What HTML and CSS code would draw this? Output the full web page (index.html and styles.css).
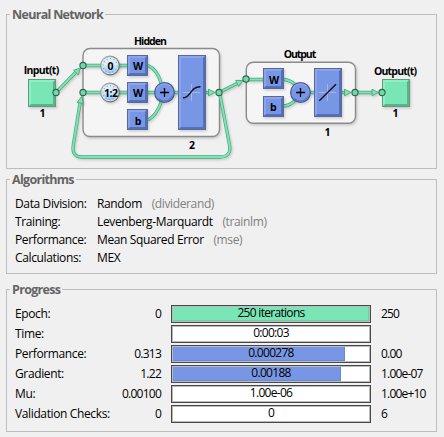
FILE: index.html
```html
<!DOCTYPE html>
<html lang="en">
<head>
<meta charset="utf-8">
<title>Neural Network Training</title>
<link rel="stylesheet" href="styles.css">
</head>
<body>
<fieldset class="panel network">
<legend>Neural Network</legend>
<svg class="diagram" viewBox="7 22 429 146" width="429" height="146">
  <defs>
    <linearGradient id="lens" x1="0" y1="0" x2="0" y2="1"><stop offset="0" stop-color="#dcecf8"/><stop offset=".45" stop-color="#dceefb"/><stop offset="1" stop-color="#84c4fb"/></linearGradient>
    <linearGradient id="rim" x1="0" y1="0" x2="1" y2="1"><stop offset="0" stop-color="#b4b4b4"/><stop offset="1" stop-color="#5c5c5c"/></linearGradient>
    <filter id="shade" x="-30%" y="-30%" width="170%" height="170%" color-interpolation-filters="sRGB"><feDropShadow dx="1.2" dy="1.5" stdDeviation="0.8" flood-color="#000" flood-opacity=".16"/></filter>
    <g id="weight">
      <rect width="21" height="21" fill="#6078bd"/>
      <path d="M1 1H20L18 3H3V18L1 20Z" fill="#8ba4ec"/>
      <path d="M20 1V20H1L3 18H18V3Z" fill="#5570bb"/>
      <rect x="3" y="3" width="15" height="15" fill="#7796e6"/>
      <rect x=".5" y=".5" width="20" height="20" fill="none" stroke="#5a6a96"/>
    </g>
    <g id="terminal">
      <rect width="28" height="28" fill="#79e7b5"/>
      <path d="M1 1H27L25 3H3V25L1 27Z" fill="#8bf0c3"/>
      <path d="M27 1V27H1L3 25H25V3Z" fill="#58b589"/>
      <rect x=".5" y=".5" width="27" height="27" fill="none" stroke="#66977f"/>
    </g>
    <g id="delay">
      <circle r="9.900" fill="url(#rim)"/><circle r="8.700" fill="#dfe1e3"/>
      <circle r="7.900" fill="url(#lens)"/>
      <circle r="6.900" fill="none" stroke="#5aa6e6" stroke-width="1.200" stroke-dasharray=".9 2.7"/>
    </g>
    <g id="sum">
      <circle r="9.900" fill="#7796e6" stroke="#4b5a88" stroke-width="1.200"/>
      <path d="M-8-3A8.500 8.500 0 0 1 6-6" fill="none" stroke="#8fa8ec" stroke-width="1.200"/>
      <path d="M8 3A8.500 8.500 0 0 1-6 6" fill="none" stroke="#5b77c6" stroke-width="1.200"/>
      <path d="M-4.500 0H4.500M0-4.500V4.500" stroke="#000" stroke-width="1.300"/>
    </g>
    <circle id="port" r="3.100" fill="#70d9a9" stroke="#32634c" stroke-width="1.100"/>
    <path id="head" d="M-6.500-3.300L0 0L-6.500 3.300Z" fill="#79e7b5" stroke="#4a9f78" stroke-width=".8"/>
    <path id="wires" d="M56 92.500L78 70M83 65.500H128M83 92.500H178M148 65.500Q157 69 161.500 84M148 120Q157 115 161.500 101M206 92.500H210M219 92.500L237 83.500M246 79.500H263M284 79.500Q290 80 295 84.500M284 106Q290 105.500 295 100.500M310 92.500H314M342 92.500H345M356 92.500H374M219.500 92.500L229.700 146Q231 157 220 157H82Q71.500 157 73.300 145L80 103"/>
  </defs>

  <g filter="url(#shade)" stroke="#8b8b8b" stroke-width="1.400">
    <rect x="83" y="48.500" width="136.500" height="88" rx="7" fill="#f5f5f5"/>
    <rect x="246.300" y="62.300" width="109.200" height="61" rx="7" fill="#f5f5f5"/>
  </g>

  <g filter="url(#shade)" fill="none">
    <use href="#wires" stroke="#4ca57c" stroke-width="3.300"/>
    <use href="#wires" stroke="#7ae5b4" stroke-width="1.900"/>
    <use href="#head" transform="translate(80.500 68) rotate(-45)"/>
    <use href="#head" transform="translate(81.500 96.500) rotate(-80)"/>
    <use href="#head" transform="translate(215 92.500)"/>
    <use href="#head" transform="translate(243 80.500) rotate(-26)"/>
    <use href="#head" transform="translate(351 92.500)"/>
    <use href="#head" transform="translate(378.500 92.500)"/>
  </g>

  <g filter="url(#shade)">
    <use href="#terminal" x="28" y="79"/><use href="#terminal" x="382" y="79"/>
    <use href="#delay" x="110" y="65.500"/><use href="#delay" x="110" y="92.500"/>
    <use href="#weight" x="127" y="55"/><use href="#weight" x="127" y="82"/><use href="#weight" x="127" y="109"/>
    <use href="#weight" x="263" y="68"/><use href="#weight" x="263" y="96"/>
    <use href="#sum" x="164.500" y="92.500"/><use href="#sum" x="300.500" y="92.500"/>
    <g>
      <rect x="178" y="55" width="28" height="75" fill="#7796e6"/>
      <path d="M179 56H205L203 58H181V127L179 129Z" fill="#8ba4ec"/>
      <path d="M205 56V129H179L181 127H203V58Z" fill="#5570bb"/>
      <rect x="178.500" y="55.500" width="27" height="74" fill="none" stroke="#5a6a96"/>
      <rect x="314" y="68" width="28" height="49" fill="#7796e6"/>
      <path d="M315 69H341L339 71H317V114L315 116Z" fill="#8ba4ec"/>
      <path d="M341 69V116H315L317 114H339V71Z" fill="#5570bb"/>
      <rect x="314.500" y="68.500" width="27" height="48" fill="none" stroke="#5a6a96"/>
    </g>
  </g>
  <path d="M183 92.500H200M191.500 84V101M319 92.500H336M327.500 84V101" stroke="#a8b6df"/>
  <path d="M183 97.800C191 98 190 86.500 200.500 86.800M319.300 100.800L336 84.300" fill="none" stroke="#10121c" stroke-width="1.400"/>

  <use href="#port" x="56" y="92.500"/><use href="#port" x="83" y="65.500"/><use href="#port" x="83" y="92.500"/>
  <use href="#port" x="219" y="92.500"/><use href="#port" x="246" y="79"/><use href="#port" x="355" y="92.500"/><use href="#port" x="382" y="92.500"/>

  <g class="caption">
    <text x="41.500" y="74" textLength="35.500">Input(t)</text>
    <text x="150.500" y="44.500" textLength="33">Hidden</text>
    <text x="300" y="57.500" textLength="32.500">Output</text>
    <text x="395.500" y="74.500" textLength="43">Output(t)</text>
    <text x="42.500" y="116.500">1</text><text x="395.500" y="116.500">1</text>
    <text x="192" y="148.500">2</text><text x="327.500" y="135.500">1</text>
    <text x="110.500" y="69.500">0</text><text x="111" y="97" textLength="14">1:2</text>
    <text x="138" y="69.500" textLength="9.500">W</text><text x="138" y="97" textLength="9.500">W</text><text x="138" y="124.500">b</text>
    <text x="274" y="83.500" textLength="9.500">W</text><text x="273.300" y="110.500">b</text>
  </g>
</svg>
</fieldset>

<fieldset class="panel algorithms">
<legend>Algorithms</legend>
<dl class="facts">
  <dt>Data Division:</dt><dd>Random <small>(dividerand)</small></dd>
  <dt>Training:</dt><dd>Levenberg-Marquardt <small>(trainlm)</small></dd>
  <dt>Performance:</dt><dd>Mean Squared Error <small>(mse)</small></dd>
  <dt>Calculations:</dt><dd>MEX</dd>
</dl>
</fieldset>

<fieldset class="panel progress">
<legend>Progress</legend>
<div class="rows">
  <div class="row"><span>Epoch:</span><span class="start">0</span><div class="bar"><i class="fill green" style="width:100%"></i><b>250 iterations</b></div><span class="goal">250</span></div>
  <div class="row"><span>Time:</span><span class="start"></span><div class="bar"><b>0:00:03</b></div><span class="goal"></span></div>
  <div class="row"><span>Performance:</span><span class="start">0.313</span><div class="bar"><i class="fill blue" style="width:86.9%"></i><b>0.000278</b></div><span class="goal">0.00</span></div>
  <div class="row"><span>Gradient:</span><span class="start">1.22</span><div class="bar"><i class="fill blue" style="width:84.85%"></i><b>0.00188</b></div><span class="goal">1.00e-07</span></div>
  <div class="row"><span>Mu:</span><span class="start">0.00100</span><div class="bar"><b>1.00e-06</b></div><span class="goal">1.00e+10</span></div>
  <div class="row"><span>Validation Checks:</span><span class="start">0</span><div class="bar"><b>0</b></div><span class="goal">6</span></div>
</div>
</fieldset>
</body>
</html>
```
FILE: styles.css
```css
* { box-sizing: border-box; }
html { height: 100%; overflow: hidden; }
body {
  margin: 0;
  padding: 7px 6px 0;
  background: #f0f0f0;
  color: #000;
  font: 12px/18px "Open Sans", "Noto Sans", sans-serif;
  letter-spacing: -0.37px;
}
.panel {
  width: 431px;
  min-width: 0;
  margin: 0;
  padding: 0;
  border: 1px solid #bdbdbd;
}
.network { height: 162px; }
.algorithms { height: 102px; margin-top: 3px; }
.progress { height: 150px; margin-top: 8px; }
legend {
  height: 15px;
  margin-left: 3px;
  padding: 0 2px;
  color: #646464;
  font-size: 12.5px;
  font-weight: 700;
  line-height: 15px;
  letter-spacing: -0.7px;
}
.diagram { display: block; }
.caption text {
  font: 700 10.5px "Open Sans", "Noto Sans", sans-serif;
  letter-spacing: 0;
  text-anchor: middle;
}
.facts {
  display: grid;
  grid-template-columns: 82px 1fr;
  grid-auto-rows: 18px;
  margin: 0;
  padding: 8px 0 0 8px;
}
dd { margin: 0; }
small {
  margin-left: 7px;
  color: #808080;
  font-size: inherit;
}
.rows {
  display: grid;
  gap: 2px;
  padding: 8px 0 0 8px;
}
.row {
  display: grid;
  grid-template-columns: 96px 50px 210px 1fr;
  height: 18px;
  white-space: nowrap;
}
.start {
  text-align: right;
  letter-spacing: -0.75px;
}
.goal {
  padding-left: 10px;
  letter-spacing: -0.8px;
}
.bar {
  position: relative;
  width: 200px;
  height: 18px;
  margin-left: 10px;
  border: 1px solid #484848;
  background: #fff;
  box-shadow: inset 0 0 0 1px #bbb;
  text-align: center;
}
.bar b {
  position: relative;
  display: block;
  font-weight: 400;
  line-height: 14px;
  letter-spacing: -0.7px;
}
.fill {
  position: absolute;
  inset: 1px auto 1px 1px;
  max-width: 196px;
}
.green { background: #79e6b5; box-shadow: inset -1px -1px #6dd0a3; }
.blue { background: #7796e6; box-shadow: inset -1px -1px #6b87cf; }
```
